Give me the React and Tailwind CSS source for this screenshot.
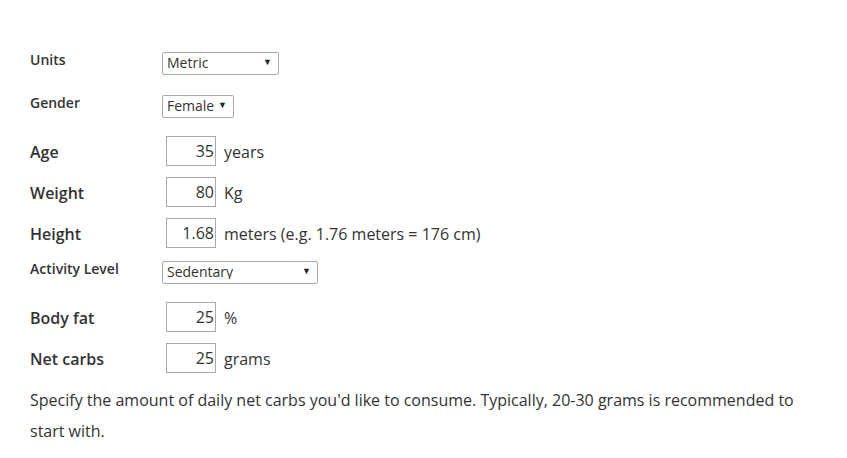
import React from "react";

const font = { fontFamily: '"Open Sans", "Noto Sans", sans-serif' };

const SelectBox = ({ value, options, width }) => (
  <div className={`relative ${width} h-[23px]`}>
    <select
      defaultValue={value}
      className="h-full w-full appearance-none rounded-[2px] border border-[#a9a9a9] bg-white pl-[4px] text-[14px] leading-none text-[#333] outline-none"
    >
      {options.map((o) => (
        <option key={o}>{o}</option>
      ))}
    </select>
    <span className="pointer-events-none absolute right-[7px] top-[7px] text-[9px] leading-none text-[#222]">
      ▼
    </span>
  </div>
);

const NumberRow = ({ label, value, unit }) => (
  <div className="flex h-[30px] items-center">
    <div className="mt-[2px] w-[136px] text-[16px] font-semibold text-[#333]">{label}</div>
    <input
      defaultValue={value}
      className="h-[30px] w-[50px] border border-[#a9a9a9] bg-white pr-[1px] text-right text-[16px] text-[#333] outline-none"
    />
    <span className="ml-[8px] mt-[1px] text-[16px] text-[#333]">{unit}</span>
  </div>
);

const SelectRow = ({ label, value, options, width }) => (
  <div className="flex h-[23px] items-center">
    <div className="-mt-[4px] w-[132px] text-[14px] font-semibold text-[#333]">{label}</div>
    <SelectBox value={value} options={options} width={width} />
  </div>
);

export default function App() {
  return (
    <div className="min-h-[458px] bg-white pl-[30px] pt-[50px]" style={font}>
      <div className="flex w-[785px] flex-col">
        <SelectRow label="Units" value="Metric" options={["Metric", "Imperial"]} width="w-[117px]" />
        <div className="mt-[20px]">
          <SelectRow label="Gender" value="Female" options={["Female", "Male"]} width="w-[72px]" />
        </div>
        <div className="mt-[20px] flex flex-col gap-[11px]">
          <NumberRow label="Age" value="35" unit="years" />
          <NumberRow label="Weight" value="80" unit="Kg" />
          <NumberRow label="Height" value="1.68" unit="meters (e.g. 1.76 meters = 176 cm)" />
          <SelectRow
            label="Activity Level"
            value="Sedentary"
            options={["Sedentary", "Lightly active", "Moderately active", "Very active"]}
            width="w-[156px]"
          />
        </div>
        <div className="mt-[20px] flex flex-col gap-[11px]">
          <NumberRow label="Body fat" value="25" unit="%" />
          <NumberRow label="Net carbs" value="25" unit="grams" />
        </div>
        <p className="mt-[12px] text-[16px] leading-[31px] text-[#333]">
          Specify the amount of daily net carbs you'd like to consume. Typically, 20-30 grams is
          recommended to start with.
        </p>
      </div>
    </div>
  );
}
